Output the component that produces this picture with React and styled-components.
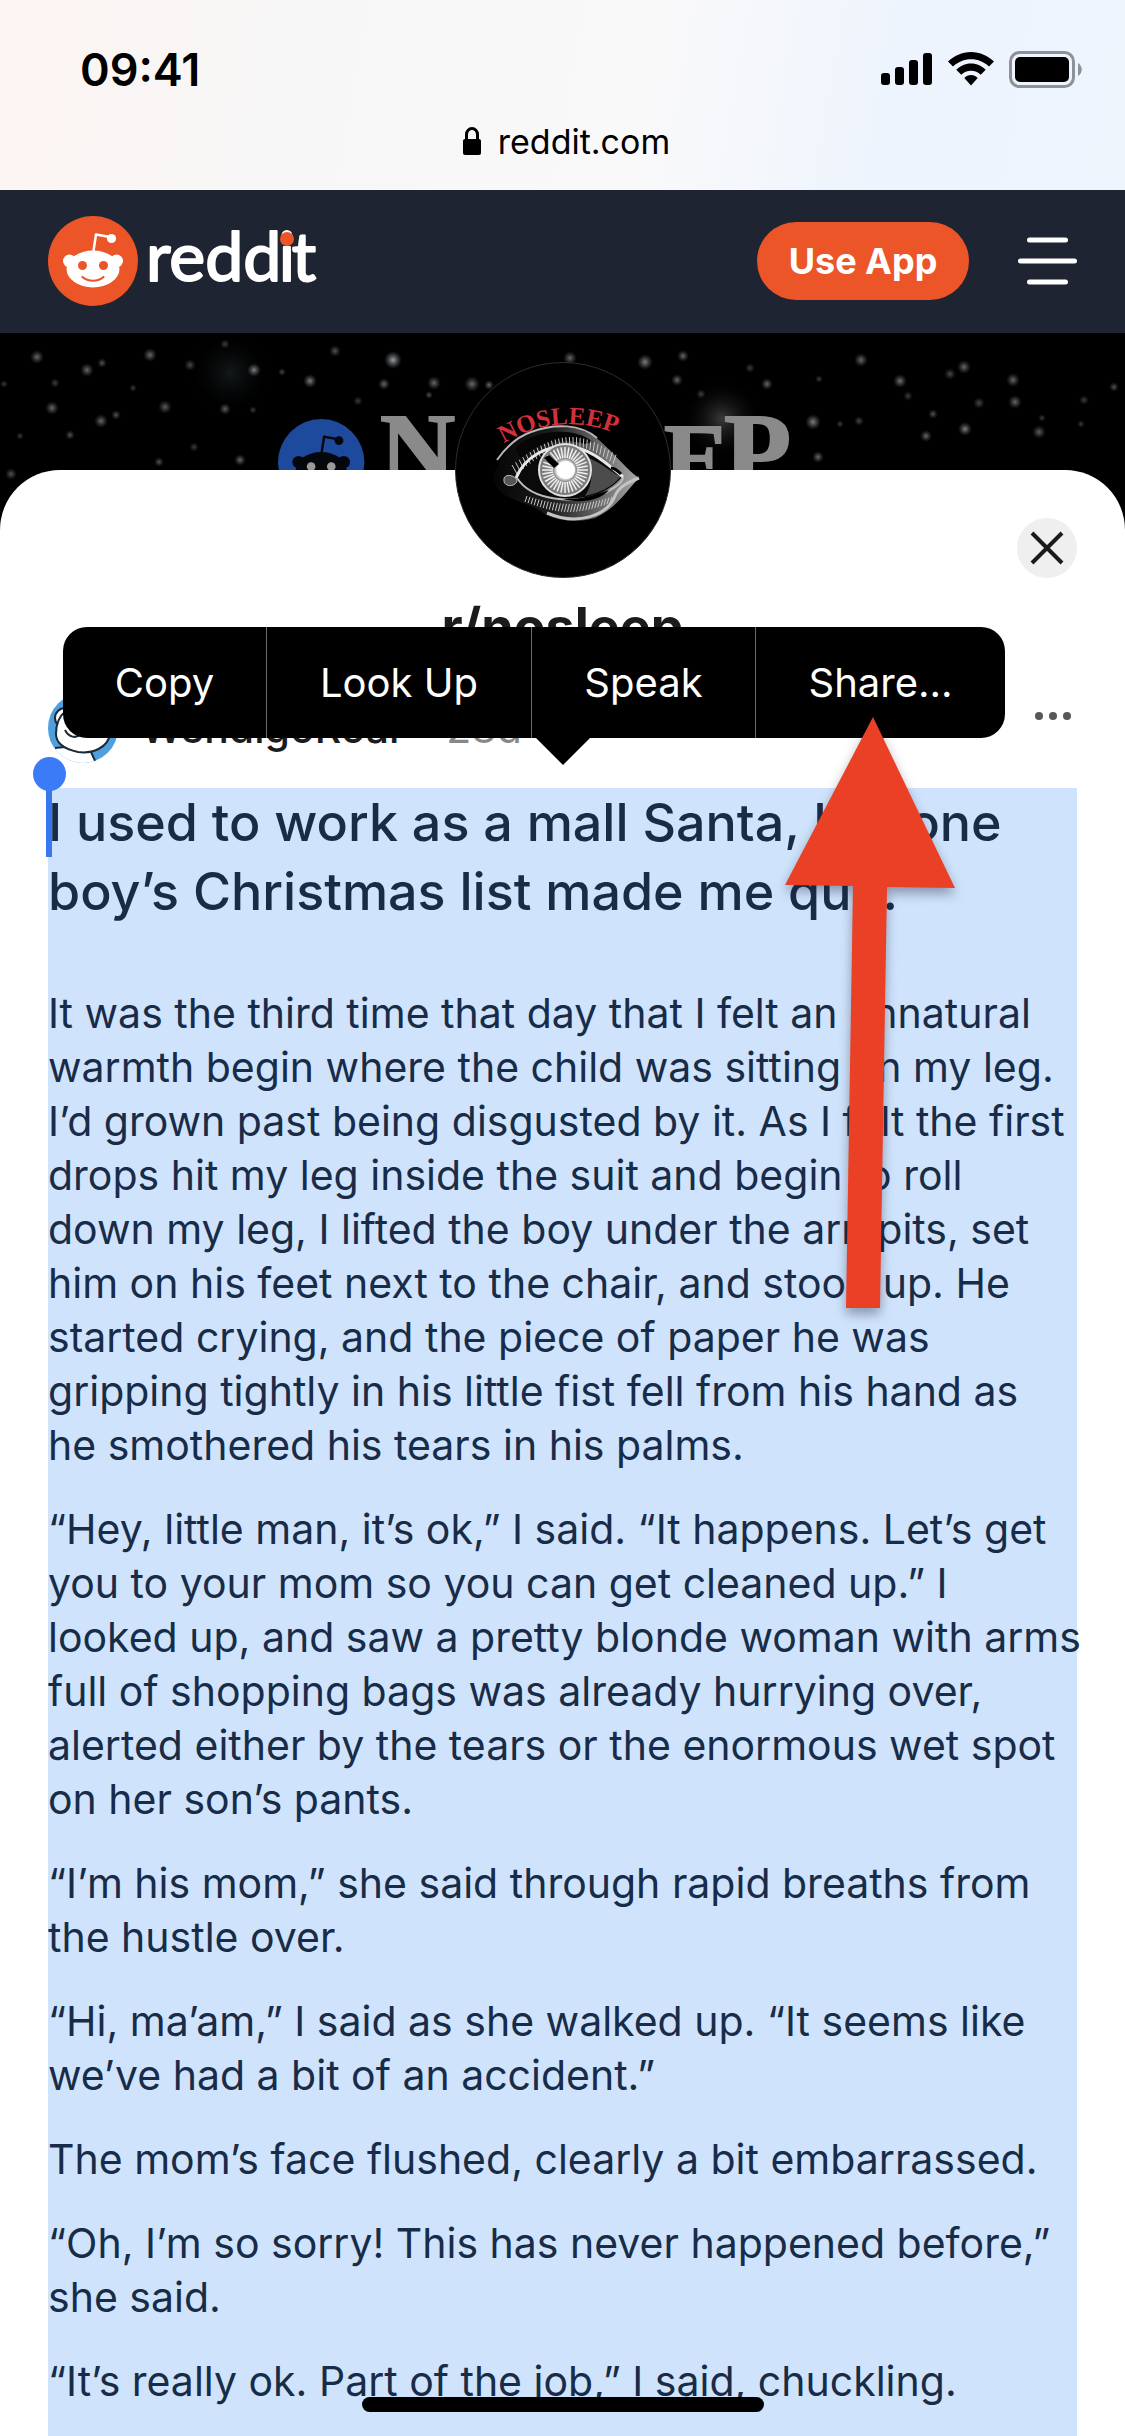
import React from "react";
import styled, { createGlobalStyle } from "styled-components";

const GlobalStyle = createGlobalStyle`
  * {
    box-sizing: border-box;
  }
  body {
    margin: 0;
    background: #000;
    font-family: Inter, "Liberation Sans", sans-serif;
  }
  button {
    margin: 0;
    padding: 0;
    border: 0;
    background: none;
    font-family: inherit;
    cursor: pointer;
  }
`;

const Screen = styled.div`
  position: relative;
  display: flex;
  flex-direction: column;
  min-height: 100vh;
  overflow: hidden;
`;

/* ---------- browser chrome ---------- */

const BrowserBar = styled.header`
  height: 190px;
  padding: 40px 42px 0 80px;
  color: #000;
  background: linear-gradient(
    100deg,
    #fcf4f2 0%,
    #f7f7f7 28%,
    #f9f9fa 58%,
    #eef4fd 78%,
    #eef5fd 100%
  );
`;

const StatusRow = styled.div`
  display: flex;
  align-items: center;
  justify-content: space-between;
  height: 58px;
`;

const Clock = styled.time`
  font-size: 45px;
  font-weight: 600;
`;

const StatusIcons = styled.div`
  display: flex;
  align-items: center;
  gap: 15px;
`;

const AddressRow = styled.div`
  display: flex;
  align-items: center;
  justify-content: center;
  gap: 17px;
  height: 86px;
  padding-right: 30px;
  font-size: 34px;
`;

/* ---------- site nav ---------- */

const NavBar = styled.nav`
  display: flex;
  align-items: center;
  justify-content: space-between;
  height: 143px;
  padding: 0 48px 2px;
  background: #1f2433;
`;

const LogoLink = styled.a`
  display: flex;
`;

const NavActions = styled.div`
  display: flex;
  align-items: center;
  gap: 49px;
`;

const UseAppButton = styled.button`
  width: 212px;
  height: 78px;
  border-radius: 39px;
  background: #eb5528;
  color: #fff;
  font-size: 36px;
  font-weight: 700;
`;

const IconButton = styled.button`
  display: flex;
  align-items: center;
  justify-content: center;
  width: ${(props) => props.$width}px;
  height: ${(props) => props.$height}px;
  border-radius: 30px;
  background: ${(props) => props.$fill || "none"};
`;

/* ---------- community ---------- */

const Banner = styled.div`
  height: 197px;
  margin-bottom: -60px;
  overflow: hidden;
  background: #000;
`;

const Sheet = styled.main`
  position: relative;
  display: flex;
  flex: 1;
  flex-direction: column;
  padding: 0 48px;
  border-radius: 60px 60px 0 0;
  background: #fff;
`;

const SheetHead = styled.div`
  display: grid;
  grid-template-columns: 1fr auto 1fr;
  height: 108px;
`;

const CommunityIcon = styled.div`
  grid-column: 2;
  width: 216px;
  height: 216px;
  margin-top: -108px;
`;

const CloseCell = styled.div`
  display: flex;
  justify-content: flex-end;
  padding-top: 48px;
`;

const CommunityName = styled.h2`
  margin: 19px 0 35px;
  color: #1b1b1d;
  font-size: 52px;
  font-weight: 700;
  line-height: 60px;
  text-align: center;
`;

const AuthorRow = styled.div`
  display: flex;
  align-items: center;
  height: 72px;
  margin-bottom: 24px;
`;

const AuthorName = styled.a`
  margin-left: 22px;
  color: #1b1b1d;
  font-size: 41px;
  font-weight: 500;
  text-decoration: none;
`;

const PostAge = styled.span`
  flex: 1;
  margin-left: 18px;
  color: #85878a;
  font-size: 41px;
`;

const MoreCell = styled.div`
  align-self: flex-start;
`;

/* ---------- selected post ---------- */

const Selection = styled.article`
  position: relative;
  flex: 1;
  background: #cfe4fc;
  color: #182c48;
  white-space: pre-line;
`;

const PostTitle = styled.h1`
  margin: 0 0 60px;
  font-size: 52px;
  font-weight: 500;
  line-height: 69px;
`;

const Paragraph = styled.p`
  margin: 0 -16px 30px 0;
  font-size: 41px;
  line-height: 54px;
`;

const SelectionHandle = styled.span`
  position: absolute;
  top: 0;
  left: -2px;
  width: 6px;
  height: 69px;
  background: #3878ee;

  &::before {
    content: "";
    position: absolute;
    top: -31px;
    left: -13px;
    width: 33px;
    height: 34px;
    border-radius: 50%;
    background: #3b7bf7;
  }
`;

const TextMenu = styled.div`
  position: absolute;
  top: 157px;
  left: 63px;
  z-index: 2;
  display: flex;
  border-radius: 24px;
  background: #000;

  &::after {
    content: "";
    position: absolute;
    top: 110px;
    left: 472px;
    border: solid transparent;
    border-width: 28px 28px 0;
    border-top-color: #000;
  }
`;

const MenuItem = styled.button`
  width: ${(props) => props.$width}px;
  height: 111px;
  color: #fff;
  font-size: 40px;

  & + & {
    border-left: 1px solid #6a6a6a;
  }
`;

const PointerArrow = styled.svg`
  position: absolute;
  top: 235px;
  left: 770px;
  z-index: 3;
`;

const HomeIndicator = styled.div`
  position: fixed;
  bottom: 24px;
  left: 50%;
  width: 402px;
  height: 15px;
  margin-left: -201px;
  border-radius: 8px;
  background: #000;
`;

const paragraphs = [
  `It was the third time that day that I felt an unnatural
  warmth begin where the child was sitting on my leg.
  I’d grown past being disgusted by it. As I felt the first
  drops hit my leg inside the suit and begin to roll
  down my leg, I lifted the boy under the armpits, set
  him on his feet next to the chair, and stood up. He
  started crying, and the piece of paper he was
  gripping tightly in his little fist fell from his hand as
  he smothered his tears in his palms.`,
  `“Hey, little man, it’s ok,” I said. “It happens. Let’s get
  you to your mom so you can get cleaned up.” I
  looked up, and saw a pretty blonde woman with arms
  full of shopping bags was already hurrying over,
  alerted either by the tears or the enormous wet spot
  on her son’s pants.`,
  `“I’m his mom,” she said through rapid breaths from
  the hustle over.`,
  `“Hi, ma’am,” I said as she walked up. “It seems like
  we’ve had a bit of an accident.”`,
  `The mom’s face flushed, clearly a bit embarrassed.`,
  `“Oh, I’m so sorry! This has never happened before,”
  she said.`,
  `“It’s really ok. Part of the job,” I said, chuckling.`,
];

const menuItems = [
  { label: "Copy", width: 203 },
  { label: "Look Up", width: 265 },
  { label: "Speak", width: 224 },
  { label: "Share...", width: 250 },
];

// x, y, radius, brightness
const stars = [
  [37, 24, 6, 0.5], [87, 37, 6, 0.5], [102, 30, 4, 0.4], [55, 50, 4, 0.3],
  [150, 22, 6, 0.5], [190, 32, 5, 0.35], [133, 55, 3, 0.3], [52, 75, 6, 0.5],
  [101, 88, 6, 0.5], [116, 82, 4, 0.4], [165, 74, 6, 0.45], [70, 102, 4, 0.4],
  [20, 103, 3, 0.3], [225, 76, 5, 0.45], [254, 37, 6, 0.6], [253, 77, 3, 0.3],
  [225, 11, 4, 0.3], [282, 39, 3, 0.35], [310, 48, 6, 0.6], [335, 18, 5, 0.4],
  [393, 27, 8, 0.75], [384, 51, 5, 0.5], [358, 68, 4, 0.3], [194, 114, 4, 0.3],
  [240, 127, 5, 0.5], [159, 129, 4, 0.4], [11, 141, 5, 0.4], [4, 51, 3, 0.3],
  [434, 50, 6, 0.5], [429, 62, 3, 0.4], [472, 51, 7, 0.5], [489, 52, 4, 0.5],
  [570, 25, 6, 0.5], [645, 29, 7, 0.6], [683, 23, 5, 0.5], [677, 47, 5, 0.5],
  [750, 35, 4, 0.3], [767, 51, 5, 0.5], [819, 46, 3, 0.3], [861, 27, 6, 0.5],
  [900, 48, 6, 0.55], [908, 63, 4, 0.3], [950, 41, 5, 0.35], [964, 34, 6, 0.5],
  [1013, 47, 6, 0.5], [979, 70, 5, 0.35], [1015, 69, 6, 0.5], [933, 81, 4, 0.4],
  [813, 89, 7, 0.6], [840, 91, 3, 0.3], [859, 88, 4, 0.35], [926, 103, 5, 0.5],
  [965, 96, 6, 0.6], [1039, 99, 6, 0.45], [1042, 85, 3, 0.3], [1081, 91, 3, 0.3],
  [1084, 67, 4, 0.3], [1114, 54, 4, 0.4], [818, 124, 5, 0.5], [701, 61, 4, 0.3],
];

function SignalIcon() {
  return (
    <svg width="52" height="34" viewBox="0 0 52 34">
      <rect x="0" y="21" width="9" height="12" rx="3" />
      <rect x="14" y="15" width="9" height="18" rx="3" />
      <rect x="28" y="8" width="9" height="25" rx="3" />
      <rect x="42" y="1" width="9" height="32" rx="3" />
    </svg>
  );
}

function WifiIcon() {
  return (
    <svg width="46" height="34" viewBox="0 0 46 34">
      <path d="M23 0C14 0 6 4 0 9.500L5 14.500C10 10 16 7.300 23 7.300S36 10 41 14.500L46 9.500C40 4 32 0 23 0Z" />
      <path d="M23 11.500C17 11.500 12 14 8.300 17.800L13.300 22.800C16 20.200 19 18.700 23 18.700S30 20.200 32.700 22.800L37.700 17.800C34 14 29 11.500 23 11.500Z" />
      <path d="M23 23C20.500 23 18 24 16.300 26L23 33.500L29.700 26C28 24 25.500 23 23 23Z" />
    </svg>
  );
}

function BatteryIcon() {
  return (
    <svg width="74" height="37" viewBox="0 0 74 37">
      <rect x="1.500" y="1.500" width="63" height="34" rx="9" fill="none" stroke="#8e9197" strokeWidth="3" />
      <rect x="6" y="6" width="54" height="25" rx="5" />
      <path d="M69 12C74 15 74 22 69 25Z" fill="#8e9197" />
    </svg>
  );
}

function LockIcon() {
  return (
    <svg width="18" height="28" viewBox="0 0 18 28">
      <rect x="0" y="12" width="18" height="16" rx="2" />
      <path d="M3.500 13V7.500a5.500 6 0 0 1 11 0V13" fill="none" stroke="#000" strokeWidth="3" />
    </svg>
  );
}

function Snoo({ disc, face, eye }) {
  return (
    <>
      <circle cx="45" cy="45" r="45" fill={disc} />
      <path d="M45 38L48 18.500L62 21" fill="none" stroke={face} strokeWidth="2.500" strokeLinejoin="round" />
      <circle cx="63.500" cy="22.500" r="4.600" fill={face} />
      <circle cx="21.500" cy="45" r="6.500" fill={face} />
      <circle cx="68.500" cy="45" r="6.500" fill={face} />
      <ellipse cx="45" cy="53" rx="26.500" ry="18.500" fill={face} />
      <circle cx="34.500" cy="49.500" r="4.500" fill={eye} />
      <circle cx="55.500" cy="49.500" r="4.500" fill={eye} />
      <path d="M34.500 61C40 66 50 66 55.500 61" fill="none" stroke={eye} strokeWidth="2.200" strokeLinecap="round" />
    </>
  );
}

function RedditLogo() {
  return (
    <svg width="272" height="90" viewBox="0 0 272 90">
      <Snoo disc="#eb5528" face="#fff" eye="#eb5528" />
      <text
        x="98"
        y="65"
        fill="#fff"
        stroke="#fff"
        strokeWidth="2"
        strokeLinejoin="round"
        fontFamily="Lato, sans-serif"
        fontSize="68"
      >
        redd
        <tspan x="239" textAnchor="middle">i</tspan>
        <tspan x="256" textAnchor="middle">t</tspan>
      </text>
      <circle cx="239" cy="23" r="7" fill="#eb5528" />
    </svg>
  );
}

function StarryBanner() {
  return (
    <svg width="100%" height="197" viewBox="0 0 1125 197" preserveAspectRatio="xMidYMin slice">
      <defs>
        <radialGradient id="star">
          <stop offset="0" stopColor="#cfd3d6" />
          <stop offset="0.400" stopColor="#9a9fa3" stopOpacity="0.700" />
          <stop offset="1" stopColor="#5c6166" stopOpacity="0" />
        </radialGradient>
        <radialGradient id="haze">
          <stop offset="0" stopColor="#14191b" />
          <stop offset="1" stopColor="#000" stopOpacity="0" />
        </radialGradient>
        <radialGradient id="glow">
          <stop offset="0" stopColor="#3a3a3a" />
          <stop offset="1" stopColor="#000" stopOpacity="0" />
        </radialGradient>
      </defs>
      <circle cx="230" cy="40" r="42" fill="url(#haze)" />
      <circle cx="722" cy="86" r="40" fill="url(#glow)" />
      {stars.map(([x, y, r, o]) => (
        <circle key={`${x}-${y}`} cx={x} cy={y} r={r + 1} fill="url(#star)" opacity={o} />
      ))}
      <g transform="translate(278 86) scale(0.960)">
        <Snoo disc="#1d4a9c" face="#05070c" eye="#9a9a9a" />
      </g>
      <g fill="#8a8a8a" stroke="#8a8a8a" strokeWidth="2" fontFamily="Liberation Serif, serif" fontWeight="700">
        <text x="380" y="152" fontSize="104">N</text>
        <text x="664" y="158" fontSize="98">E</text>
        <text x="724" y="156" fontSize="110">P</text>
      </g>
    </svg>
  );
}

function EyeIcon() {
  const rays = Array.from({ length: 36 }, (_, i) => (i * Math.PI) / 18);
  const lashes = Array.from({ length: 30 }, (_, i) => i / 29);
  return (
    <svg width="216" height="216" viewBox="0 0 216 216">
      <defs>
        <linearGradient id="skin" x1="0" x2="1">
          <stop offset="0" stopColor="#050505" />
          <stop offset="0.400" stopColor="#1c1c1c" />
          <stop offset="1" stopColor="#a8a8a8" />
        </linearGradient>
        <radialGradient id="iris">
          <stop offset="0.300" stopColor="#fff" />
          <stop offset="0.450" stopColor="#8c8c8c" />
          <stop offset="1" stopColor="#777" />
        </radialGradient>
        <path id="arch" d="M43 85Q103 46 167 74" />
      </defs>
      <circle cx="108" cy="108" r="107.500" stroke="#2c2c2c" />
      <path
        d="M38 116C42 98 56 80 72 72C96 62 126 62 144 78C162 94 172 108 184 116C172 128 162 146 140 156C118 162 96 158 84 148C66 138 40 136 38 116Z"
        fill="url(#skin)"
      />
      <path d="M42 98C52 84 64 74 76 70C100 61 126 62 142 76" fill="none" stroke="#b5b5b5" strokeWidth="2" />
      <path d="M60 88C72 70 116 62 138 80L130 82C108 76 84 80 66 96Z" fill="#060606" />
      <path d="M62 115C72 96 90 85 110 84C136 84 152 104 168 114C152 132 132 138 108 138C86 138 68 128 62 115Z" fill="#0a0a0a" />
      <path d="M134 96C148 102 158 112 166 114C156 126 146 130 130 134C138 122 138 108 134 96Z" fill="#4c4c4c" />
      <g stroke="#c9c9c9" strokeWidth="1">
        {lashes.map((t) => {
          const x = 62 + t * 96;
          const y = 112 - Math.sin(t * Math.PI * 0.880) * 28;
          return (
            <g key={t}>
              <line x1={x} y1={y} x2={x - 5 + t * 8} y2={y - 9} />
              <line x1={72 + t * 88} y1={134 + Math.sin(t * Math.PI) * 8} x2={70 + t * 88} y2={140 + Math.sin(t * Math.PI) * 10} />
            </g>
          );
        })}
      </g>
      <path d="M61 116C70 94 92 84 112 84C136 86 152 102 168 115" fill="none" stroke="#e8e8e8" strokeWidth="3" />
      <path d="M62 116C76 138 118 144 152 130C162 124 168 120 168 115" fill="none" stroke="#bdbdbd" strokeWidth="2" />
      <path d="M92 151C122 164 152 154 160 134C164 124 174 120 184 116" fill="none" stroke="#c4c4c4" strokeWidth="3" />
      <path d="M108 137C126 138 142 132 154 128C146 138 126 142 108 137Z" fill="#000" />
      <path d="M49 116C52 111 60 114 62 118C62 124 52 126 49 120Z" fill="#555" stroke="#bbb" />
      <circle cx="110" cy="108" r="26" fill="url(#iris)" stroke="#e2e2e2" strokeWidth="2" />
      <g stroke="#f1f1f1" strokeWidth="1.500">
        {rays.map((a) => (
          <line
            key={a}
            x1={110 + Math.cos(a) * 12}
            y1={108 + Math.sin(a) * 12}
            x2={110 + Math.cos(a) * 23}
            y2={108 + Math.sin(a) * 23}
          />
        ))}
      </g>
      <circle cx="111" cy="108" r="9" fill="#fff" />
      <path d="M89 96L94 93L104 102L99 106Z" fill="#000" />
      <path d="M156 106C160 106 164 110 166 112" fill="none" stroke="#000" strokeWidth="3" />
      <text fill="#d3303a" fontFamily="Liberation Serif, serif" fontSize="25" fontWeight="700" textAnchor="middle">
        <textPath href="#arch" startOffset="50%">NOSLEEP</textPath>
      </text>
    </svg>
  );
}

function AuthorAvatar() {
  return (
    <svg width="71" height="72" viewBox="0 0 71 72">
      <clipPath id="avatarClip">
        <circle cx="35" cy="36" r="35" />
      </clipPath>
      <g clipPath="url(#avatarClip)">
        <rect width="71" height="72" fill="#4f9fdd" />
        <path d="M0 55L16 56C26 60 36 61 43 60L48 72H0Z" fill="#fff" />
        <path d="M7 56L17 55M43 60L48 71" stroke="#1b2a38" strokeWidth="2" />
        <circle cx="17" cy="26" r="10" fill="#fff" stroke="#1b2a38" strokeWidth="2" />
        <path d="M8 42C8 20 24 12 38 14C54 16 62 28 62 42C60 56 44 62 30 60C16 57 8 52 8 42Z" fill="#fff" stroke="#1b2a38" strokeWidth="2" />
        <path d="M17 38C21 46 28 46 32 43" fill="none" stroke="#1b2a38" strokeWidth="2" />
      </g>
    </svg>
  );
}

export default function App() {
  return (
    <>
      <GlobalStyle />
      <Screen>
        <BrowserBar>
          <StatusRow>
            <Clock>09:41</Clock>
            <StatusIcons>
              <SignalIcon />
              <WifiIcon />
              <BatteryIcon />
            </StatusIcons>
          </StatusRow>
          <AddressRow>
            <LockIcon />
            <span>reddit.com</span>
          </AddressRow>
        </BrowserBar>

        <NavBar>
          <LogoLink href="#" aria-label="reddit home">
            <RedditLogo />
          </LogoLink>
          <NavActions>
            <UseAppButton>Use App</UseAppButton>
            <IconButton $width={59} $height={59} aria-label="Menu">
              <svg width="59" height="48" viewBox="0 0 59 48" stroke="#fff" strokeWidth="5" strokeLinecap="round">
                <path d="M11.500 3H47.500M2.500 24H56.500M11.500 45H47.500" />
              </svg>
            </IconButton>
          </NavActions>
        </NavBar>

        <Banner>
          <StarryBanner />
        </Banner>

        <Sheet>
          <SheetHead>
            <CommunityIcon>
              <EyeIcon />
            </CommunityIcon>
            <CloseCell>
              <IconButton $width={60} $height={60} $fill="#efefef" aria-label="Close">
                <svg width="34" height="34" viewBox="0 0 34 34" stroke="#1b1b1b" strokeWidth="4">
                  <path d="M2 2L32 32M32 2L2 32" />
                </svg>
              </IconButton>
            </CloseCell>
          </SheetHead>
          <CommunityName>r/nosleep</CommunityName>
          <AuthorRow>
            <AuthorAvatar />
            <AuthorName href="#">WendigoRoar</AuthorName>
            <PostAge>· 28d</PostAge>
            <MoreCell>
              <IconButton $width={48} $height={48} aria-label="More">
                <svg width="40" height="10" viewBox="0 0 40 10" fill="#55575a">
                  <circle cx="6" cy="5" r="4" />
                  <circle cx="20" cy="5" r="4" />
                  <circle cx="34" cy="5" r="4" />
                </svg>
              </IconButton>
            </MoreCell>
          </AuthorRow>

          <Selection>
            <SelectionHandle />
            <PostTitle>
              {"I used to work as a mall Santa, but one\nboy’s Christmas list made me quit."}
            </PostTitle>
            {paragraphs.map((text) => (
              <Paragraph key={text}>{text}</Paragraph>
            ))}
          </Selection>

          <TextMenu>
            {menuItems.map((item) => (
              <MenuItem key={item.label} $width={item.width}>
                {item.label}
              </MenuItem>
            ))}
          </TextMenu>

          <PointerArrow width="200" height="620" viewBox="770 705 200 620">
            <path
              d="M873 717L955 888L887 887L880 1308L846 1308L853 886L785 885Z"
              fill="#ea4025"
              filter="drop-shadow(0 6px 6px rgba(30, 30, 60, 0.4))"
            />
          </PointerArrow>
        </Sheet>

        <HomeIndicator />
      </Screen>
    </>
  );
}
